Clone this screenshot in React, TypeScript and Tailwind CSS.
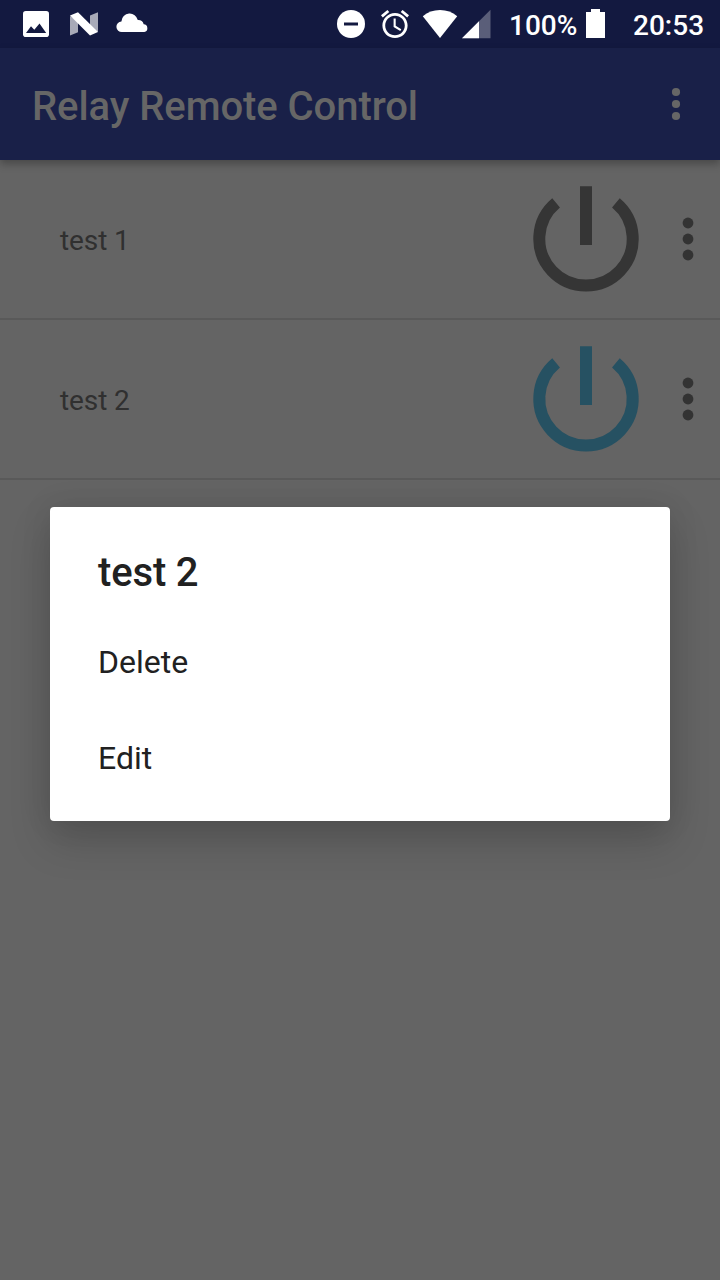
import React from "react";

type Relay = { name: string; on: boolean };

const relays: Relay[] = [
  { name: "test 1", on: false },
  { name: "test 2", on: true },
];

const actions = ["Delete", "Edit"];

function StatusBar() {
  return (
    <div className="flex h-12 shrink-0 items-center bg-[#131940] text-[28px] font-medium text-white">
      <svg className="ml-5 h-12 w-8" viewBox="20 0 32 48">
        <rect x="23" y="11" width="26" height="26" rx="2.800" fill="#fff" />
        <path d="M26 33l5-6.800 3.300 3.600 5.200-6.200L46.200 33z" fill="#131940" />
      </svg>
      <svg className="ml-3.5 h-12 w-9" viewBox="66 0 36 48">
        <path d="M70 16v19.600l8-3.400V21zM98 12.300l-8 3.200V27l8 5z" fill="#fff" fillOpacity=".63" />
        <path d="M70 15.600l8-3.300L98 32l-8 3.600z" fill="#fff" />
      </svg>
      <svg className="ml-3 h-12 w-9" viewBox="114 0 36 48" fill="#fff">
        <path d="M122 32a5.300 5.300 0 0 1-.6-10.600a8.300 8.300 0 0 1 16.400-1.300a5.800 5.800 0 0 1 5.900 4.200a3.900 3.900 0 0 1 .6 7.700z" />
      </svg>
      <svg className="ml-auto h-12 w-[34px]" viewBox="334 0 34 48">
        <circle cx="351" cy="24" r="14" fill="#fff" />
        <path d="M344 22.500h14v3h-14z" fill="#131940" />
      </svg>
      <svg className="ml-2.5 h-12 w-[34px]" viewBox="378 0 34 48" fill="#fff">
        <path
          transform="translate(378.200 7.300) scale(1.4)"
          d="M22 5.720l-4.600-3.860-1.290 1.530 4.600 3.860L22 5.720zM7.880 3.390L6.600 1.860 2 5.710l1.290 1.530 4.590-3.850zM12.500 8H11v6l4.750 2.850.75-1.230-4-2.370V8zM12 4c-4.970 0-9 4.030-9 9s4.020 9 9 9c4.970 0 9-4.030 9-9s-4.030-9-9-9zm0 16c-3.870 0-7-3.130-7-7s3.130-7 7-7 7 3.130 7 7-3.130 7-7 7z"
        />
      </svg>
      <svg className="ml-2 h-12 w-[72px]" viewBox="420 0 72 48" fill="#fff">
        <path d="M440 38L422.800 16.300Q430 10 440 10T457.200 16.300z" />
        <path d="M490.500 9.800V38.200H462z" fillOpacity=".3" />
        <path d="M479 21.300V38.200H462z" />
      </svg>
      <span className="ml-[17px] mt-[3px] w-[77px] whitespace-nowrap">100%</span>
      <svg className="h-12 w-[19px]" viewBox="586 0 19 48" fill="#fff">
        <path d="M591 9h9v3h5v26h-19V12h5z" />
      </svg>
      <span className="ml-7 mr-[15px] mt-[3px] w-[72px] whitespace-nowrap">20:53</span>
    </div>
  );
}

function AppBar() {
  return (
    <header className="relative flex h-28 shrink-0 items-center justify-between bg-[#192048] pl-8 pr-8 text-[#666] shadow-[0_4px_8px_rgba(0,0,0,0.28)]">
      <h1 className="mt-1.5 text-[40px] font-medium leading-[48px] tracking-[-0.07px]">
        Relay Remote Control
      </h1>
      <svg className="h-28 w-6" viewBox="0 0 24 112" fill="currentColor">
        <circle cx="12" cy="44" r="4.100" />
        <circle cx="12" cy="56" r="4.100" />
        <circle cx="12" cy="68" r="4.100" />
      </svg>
    </header>
  );
}

function RelayRow({ relay }: { relay: Relay }) {
  return (
    <li className="flex h-40 items-center border-b-2 border-[#595959] pl-[60px] text-[28px] text-[#303030]">
      <span className="mt-1 grow tracking-[-0.1px]">{relay.name}</span>
      <svg
        className={relay.on ? "size-[120px] text-[#265162]" : "size-[120px] text-[#353535]"}
        viewBox="0 0 120 120"
        fill="none"
        stroke="currentColor"
        strokeWidth="12"
      >
        <path d="M30.100 23.900A46.700 46.700 0 1 0 89.900 23.900M60 7.200V66" />
      </svg>
      <svg className="ml-[30px] mr-5 h-40 w-6 text-[#333]" viewBox="0 0 24 160" fill="currentColor">
        <circle cx="12" cy="64" r="5.400" />
        <circle cx="12" cy="80" r="5.400" />
        <circle cx="12" cy="96" r="5.400" />
      </svg>
    </li>
  );
}

function ActionDialog() {
  return (
    <div
      role="dialog"
      className="absolute left-[50px] top-[507px] flex h-[314px] w-[620px] flex-col rounded-[4px] bg-white px-12 pt-9 text-[#212121] shadow-[0_20px_40px_rgba(0,0,0,0.17),0_0_32px_rgba(0,0,0,0.09)]"
    >
      <h2 className="mt-1.5 h-[65px] text-[40px] font-medium leading-[48px] tracking-[-0.15px]">test 2</h2>
      {actions.map((action) => (
        <button key={action} className="flex h-24 items-center text-left text-[32px]">
          {action}
        </button>
      ))}
    </div>
  );
}

export default function App() {
  return (
    <div className="relative flex h-[1280px] w-[720px] flex-col overflow-hidden bg-[#646464] font-['Roboto',sans-serif]">
      <StatusBar />
      <AppBar />
      <ul>
        {relays.map((relay) => (
          <RelayRow key={relay.name} relay={relay} />
        ))}
      </ul>
      <ActionDialog />
    </div>
  );
}
